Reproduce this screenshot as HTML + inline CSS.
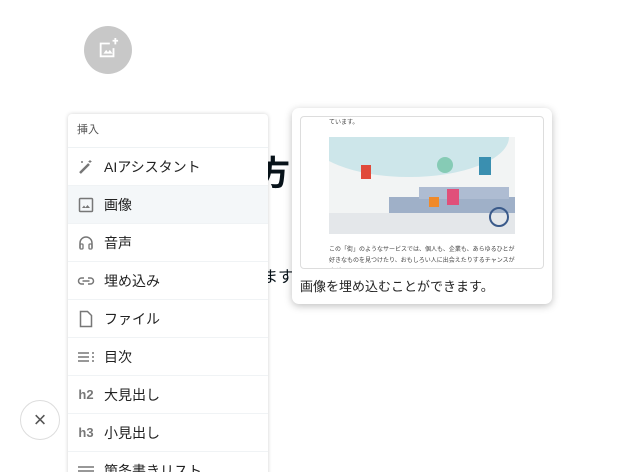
<!DOCTYPE html>
<html style="height:472px;overflow:hidden"><head><meta charset="utf-8"><style>
body{margin:0;width:618px;height:472px;overflow:hidden;background:#fff;font-family:"Liberation Sans","Noto Sans CJK JP",sans-serif;position:relative;color:#08131a}
.abs{position:absolute}
.menu{left:68px;top:114px;width:200px;height:370px;background:#fff;border-radius:4px;box-shadow:0 0 4px rgba(0,0,0,.18);z-index:2}
.hd{height:33px;line-height:33px;padding-left:9px;font-size:11px;color:#555;border-bottom:1px solid #eef2f4}
.row{height:37px;border-bottom:1px solid #f0f3f5;display:flex;align-items:center;font-size:14px;color:#222}
.row.sel{background:#f4f7f9}
.ic{width:36px;display:flex;justify-content:center;color:#777;font-weight:bold;font-size:13px}
.pop{left:292px;top:108px;width:260px;height:196px;background:#fff;border-radius:7px;box-shadow:0 2px 8px rgba(0,0,0,.25);z-index:3}
</style></head><body>
<div class="abs" style="left:84px;top:26px;width:48px;height:48px;border-radius:50%;background:#c8c8c8"></div>
<svg class="abs" style="left:97px;top:38px" width="22" height="22" viewBox="0 0 24 24"><path d="M19 7V4h-2V2h2V0h2v2h2v2h-2v3zM3 5h11v2H5v12h12v-8h2v10H3z M7 17l3-4 2 2.5 2-2.5 3 4z" fill="#fff"/></svg>
<div class="abs" style="left:256px;top:146px;font-size:34px;font-weight:bold">方</div>
<div class="abs" style="left:262px;top:263px;font-size:16px">ます</div>
<div class="abs" style="left:20px;top:400px;width:38px;height:38px;border-radius:50%;border:1px solid #ddd;text-align:center;line-height:38px;font-size:22px;color:#555">×</div>
<div class="abs menu">
<div class="hd">挿入</div>
<div class="row"><div class="ic"><svg width="16" height="16" viewBox="0 0 16 16"><path d="M2 14L11 5" stroke="#777" stroke-width="2.5"/><path d="M12 1v3M10.5 2.5h3M4 2v2M3 3h2" stroke="#777"/></svg></div>AIアシスタント</div>
<div class="row sel"><div class="ic"><svg width="16" height="16" viewBox="0 0 16 16"><rect x="1.5" y="1.5" width="13" height="13" rx="1" fill="none" stroke="#777" stroke-width="1.5"/><path d="M4 11l2-2.5 1.5 2 2-2.5 2.5 3z" fill="#777"/></svg></div>画像</div>
<div class="row"><div class="ic"><svg width="16" height="16" viewBox="0 0 16 16"><path d="M2 13V8a6 6 0 0 1 12 0v5" fill="none" stroke="#777" stroke-width="1.5"/><rect x="2" y="9" width="3" height="5" rx="1" fill="none" stroke="#777" stroke-width="1.3"/><rect x="11" y="9" width="3" height="5" rx="1" fill="none" stroke="#777" stroke-width="1.3"/></svg></div>音声</div>
<div class="row"><div class="ic"><svg width="18" height="12" viewBox="0 0 18 12"><path d="M7 3H4.5a3 3 0 0 0 0 6H7M11 3h2.5a3 3 0 0 1 0 6H11M5.5 6h7" fill="none" stroke="#777" stroke-width="1.5"/></svg></div>埋め込み</div>
<div class="row"><div class="ic"><svg width="14" height="18" viewBox="0 0 14 18"><path d="M1.5 1.5h7l4 4v11h-11z" fill="none" stroke="#777" stroke-width="1.5"/></svg></div>ファイル</div>
<div class="row"><div class="ic"><svg width="16" height="12" viewBox="0 0 16 12"><path d="M0 2h11M0 6h11M0 10h11M14 2h2M14 6h2M14 10h2" stroke="#777" stroke-width="1.5"/></svg></div>目次</div>
<div class="row"><div class="ic">h2</div>大見出し</div>
<div class="row"><div class="ic">h3</div>小見出し</div>
<div class="row"><div class="ic"><svg width="16" height="12" viewBox="0 0 16 12"><path d="M0 2h16M0 6h16" stroke="#777" stroke-width="1.5"/></svg></div>箇条書きリスト</div>
</div>
<div class="abs pop">
<div class="abs" style="left:8px;top:8px;width:242px;height:151px;border:1px solid #ddd;border-radius:4px;overflow:hidden">
<div class="abs" style="left:28px;top:0;font-size:6px;color:#444">ています。</div>
<div class="abs" style="left:28px;top:20px;width:186px;height:97px;background:#f2f4f4;overflow:hidden">
<div class="abs" style="left:-20px;top:-40px;width:200px;height:80px;border-radius:50%;background:#cde6ea"></div>
<div class="abs" style="left:0;top:76px;width:186px;height:21px;background:#e4e7ea"></div>
<div class="abs" style="left:60px;top:60px;width:126px;height:16px;background:#9fb0c8"></div>
<div class="abs" style="left:90px;top:50px;width:90px;height:12px;background:#aebcd2"></div>
<div class="abs" style="left:108px;top:20px;width:16px;height:16px;border-radius:50%;background:#86cbb5"></div>
<div class="abs" style="left:32px;top:28px;width:10px;height:14px;background:#e04a3a"></div>
<div class="abs" style="left:150px;top:20px;width:12px;height:18px;background:#3a8fb0"></div>
<div class="abs" style="left:118px;top:52px;width:12px;height:16px;background:#e0507a"></div>
<div class="abs" style="left:100px;top:60px;width:10px;height:10px;background:#f08a2a"></div>
<div class="abs" style="left:160px;top:70px;width:16px;height:16px;border-radius:50%;border:2px solid #3a5a8a"></div>
</div>
<div class="abs" style="left:28px;top:128px;font-size:6px;color:#444;line-height:11px;width:190px">この「街」のようなサービスでは、個人も、企業も、あらゆるひとが好きなものを見つけたり、おもしろい人に出会えたりするチャンスが広がっていま</div>
</div>
<div class="abs" style="left:8px;top:168px;font-size:13px;color:#222">画像を埋め込むことができます。</div>
</div>
</body></html>
